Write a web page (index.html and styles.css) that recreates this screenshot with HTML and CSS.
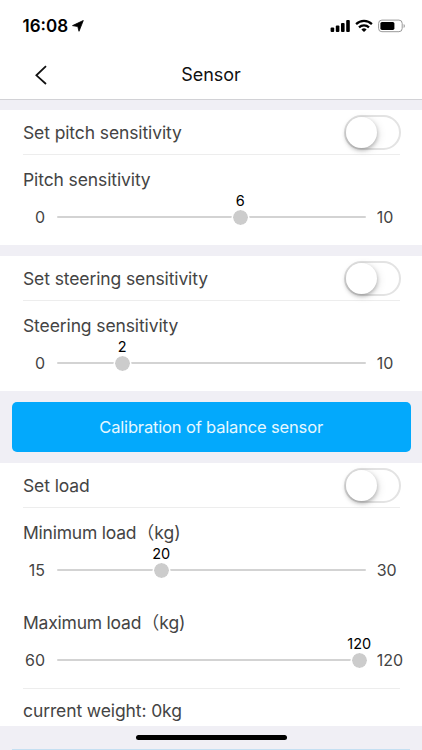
FILE: index.html
```html
<!DOCTYPE html>
<html lang="en">
<head>
<meta charset="utf-8">
<title>Sensor</title>
<link rel="stylesheet" href="styles.css">
</head>
<body>
<header class="top">
  <div class="status">
    <span class="clock">16:08</span>
    <svg class="locate" width="12" height="12" viewBox="0 0 12 12"><path d="M11.3.5 7 11.3 5.8 6.6.5 5.6z" stroke="#000" stroke-width=".8" stroke-linejoin="round"/></svg>
    <svg class="signals" width="76" height="14" viewBox="0 0 76 14">
      <rect x="0.6" y="8.6" width="3.6" height="4.4" rx="1"/>
      <rect x="5.8" y="6.6" width="3.6" height="6.4" rx="1"/>
      <rect x="11" y="4" width="3.6" height="9" rx="1"/>
      <rect x="16.2" y="1" width="3.6" height="12" rx="1"/>
      <g fill="none" stroke="#000" stroke-width="2.2"><path d="M26.1 5.1a11.3 11.3 0 0 1 15.8 0"/><path d="M29 8.4a7.2 7.2 0 0 1 10 0"/></g>
      <path d="M31.4 10.5a3.9 3.9 0 0 1 5.2 0L34 13z"/>
      <rect x="48.6" y="1.1" width="23.6" height="11.6" rx="3.3" fill="none" stroke="#999"/>
      <rect x="50.4" y="2.9" width="14" height="8" rx="1.6"/>
      <path d="M73.6 5v4c1.7-.6 1.7-3.4 0-4z" fill="#999"/>
    </svg>
  </div>
  <nav class="nav">
    <svg class="back" width="14" height="20" viewBox="0 0 14 20"><path d="M12 1.2 2.4 10.3 12 19" fill="none" stroke="#111" stroke-width="1.8"/></svg>
    <h1 class="title">Sensor</h1>
  </nav>
</header>

<main>
  <section class="panel">
    <div class="row"><span class="label">Set pitch sensitivity</span><span class="switch"></span></div>
    <div class="field">
      <div class="label">Pitch sensitivity</div>
      <div class="slider"><span class="min">0</span><div class="track"><span class="thumb" style="left:183.5px"><b class="value">6</b></span></div><span class="max">10</span></div>
    </div>
  </section>

  <section class="panel">
    <div class="row"><span class="label">Set steering sensitivity</span><span class="switch"></span></div>
    <div class="field">
      <div class="label">Steering sensitivity</div>
      <div class="slider"><span class="min">0</span><div class="track"><span class="thumb" style="left:65.5px"><b class="value">2</b></span></div><span class="max">10</span></div>
    </div>
  </section>

  <button class="calibrate">Calibration of balance sensor</button>

  <section class="panel">
    <div class="row"><span class="label">Set load</span><span class="switch"></span></div>
    <div class="field">
      <div class="label load">Minimum load<span class="unit">（kg)</span></div>
      <div class="slider"><span class="min">15</span><div class="track"><span class="thumb" style="left:104.5px"><b class="value">20</b></span></div><span class="max">30</span></div>
    </div>
    <div class="field">
      <div class="label load">Maximum load<span class="unit">（kg)</span></div>
      <div class="slider"><span class="min">60</span><div class="track"><span class="thumb" style="left:302.5px"><b class="value">120</b></span></div><span class="max">120</span></div>
    </div>
    <div class="weight"><span class="label">current weight: 0kg</span></div>
  </section>
</main>
<footer class="bottom"><div class="home"></div><div class="edge"></div></footer>
</body>
</html>
```
FILE: styles.css
```css
* { box-sizing: border-box; }
body {
  margin: 0;
  width: 422px;
  height: 750px;
  overflow: hidden;
  background: #f0eff5;
  color: #444;
  font-family: Inter, "Noto Sans CJK SC", sans-serif;
}
.top {
  height: 100px;
  background: #fff;
  border-bottom: 1px solid #d2d2d6;
}
.status {
  height: 50px;
  padding: 2px 16px 0 22.5px;
  display: flex;
  align-items: center;
}
.clock { font-size: 17px; font-weight: 600; color: #000; }
.locate { margin-left: 4px; }
.signals { margin-left: auto; }
.nav {
  height: 49px;
  display: grid;
  grid-template-columns: 60px 1fr 60px;
  align-items: center;
}
.back { margin-left: 34px; }
.title {
  margin: 0;
  text-align: center;
  font-size: 18px;
  font-weight: 400;
  color: #111;
}
main { padding-top: 10.4px; }
.panel { background: #fff; margin-bottom: 11px; padding: 0 22px 0 23px; }
.row {
  height: 45px;
  display: flex;
  align-items: center;
  justify-content: space-between;
  border-bottom: 1px solid #ededed;
}
.row .label { position: relative; top: 1px; }
.label {
  font-size: 17.5px;
  line-height: 24px;
  letter-spacing: -0.11px;
  white-space: nowrap;
}
.load { letter-spacing: -0.22px; }
.unit { margin-left: 0.5px; letter-spacing: 0; }
.switch {
  width: 57px;
  height: 35px;
  margin-right: -1.4px;
  border: 2px solid #e3e3e3;
  border-radius: 18px;
}
.switch::before {
  content: "";
  display: block;
  width: 31px;
  height: 31px;
  border-radius: 50%;
  background: #fff;
  box-shadow: 0 2px 4px rgba(0, 0, 0, .28), 2px 2px 8px rgba(0, 0, 0, .1);
}
.field { height: 90px; padding-top: 13px; }
.slider {
  height: 24px;
  margin-top: 13px;
  display: grid;
  grid-template-columns: 33.7px 309px 1fr;
  align-items: center;
  font-size: 16px;
}
.min { width: 22px; text-align: right; }
.max { padding-left: 11px; }
.track { position: relative; height: 2px; background: #d3d3d3; border-radius: 1px; }
.thumb {
  position: absolute;
  top: -7.5px;
  width: 17px;
  height: 17px;
  margin-left: -8.5px;
  border: 1px solid #fff;
  border-radius: 50%;
  background: #ccc;
  background-clip: padding-box;
  box-shadow: 0 0 0 .5px #fff;
}
.value {
  position: absolute;
  left: 50%;
  bottom: 16px;
  transform: translateX(-50%);
  font-size: 14.5px;
  line-height: 16px;
  font-weight: 400;
  color: #000;
}
.calibrate {
  display: block;
  width: 399px;
  height: 50px;
  margin: 0 0 11px 11.6px;
  padding: 0;
  border: 0;
  border-radius: 5px;
  background: #03a9fc;
  color: #e6f8ff;
  font: 400 16.5px Inter, sans-serif;
  letter-spacing: -0.16px;
}
.weight { height: 38px; border-top: 1px solid #ededed; padding-top: 10px; }
.bottom { margin-top: -11px; height: 24px; padding-top: 9px; }
.home { width: 151px; height: 5px; margin: 0 auto; border-radius: 3px; background: #000; }
.edge { height: 1px; margin: 8.6px 12px 0; background: #c4dff2; }
```
